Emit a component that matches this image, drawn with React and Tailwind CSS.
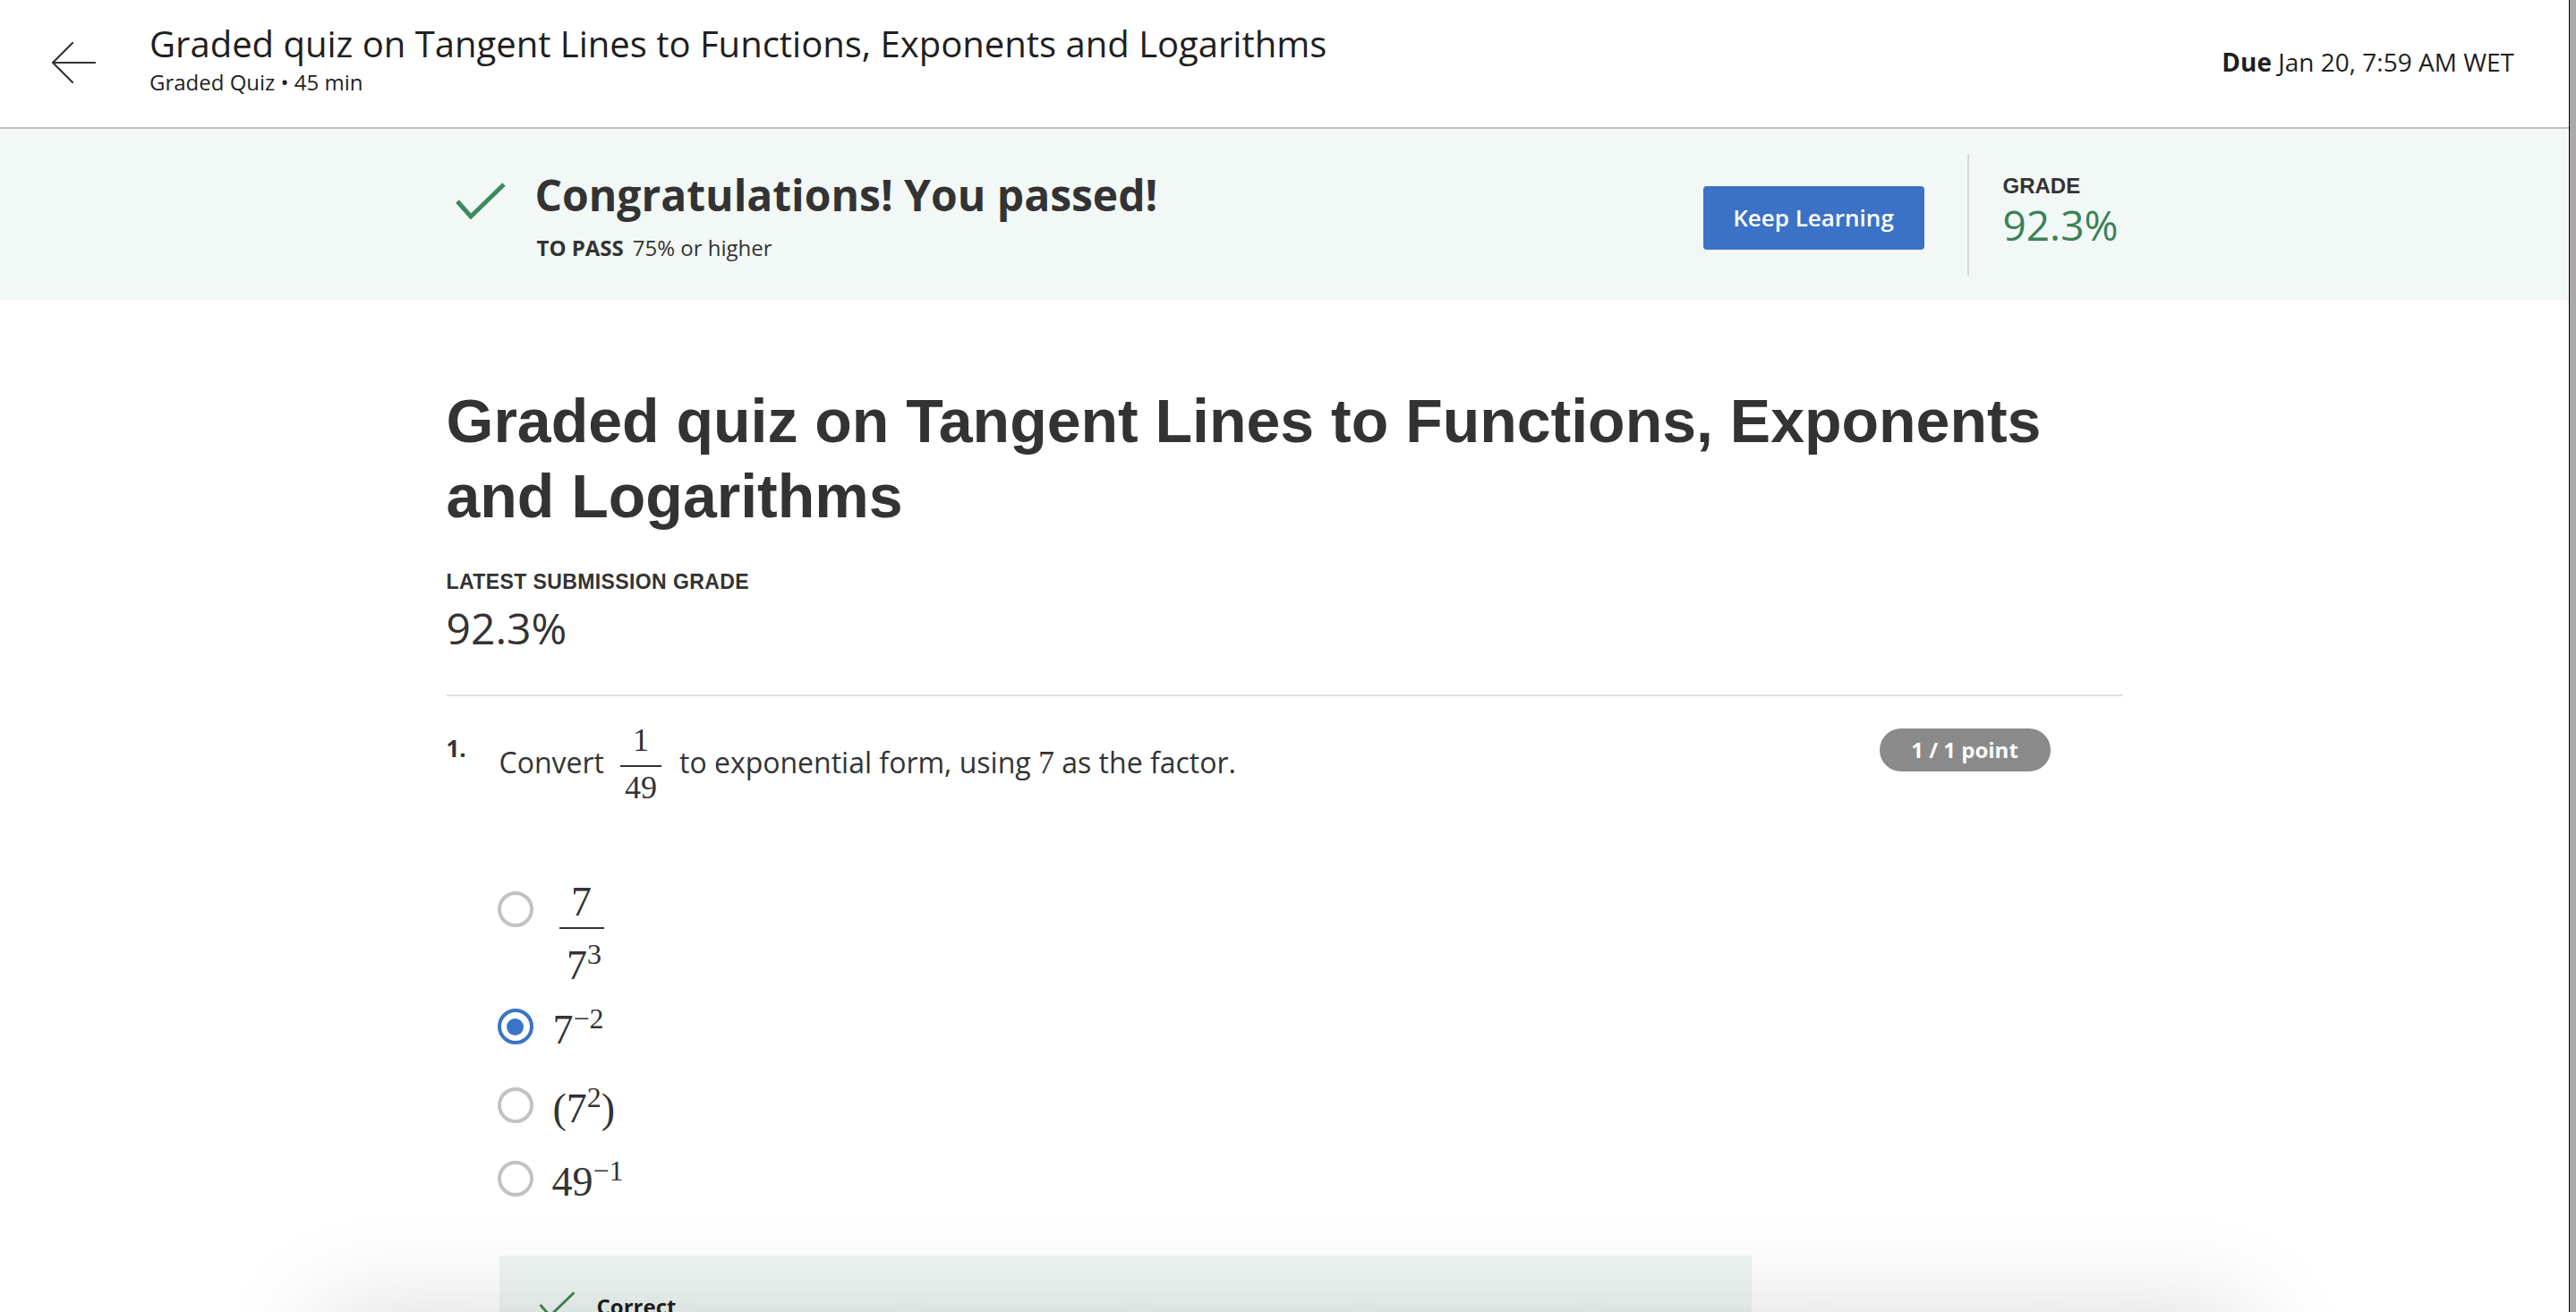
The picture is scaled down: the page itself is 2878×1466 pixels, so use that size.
import React from 'react'

const sans = { fontFamily: '"Open Sans", "Liberation Sans", sans-serif' }
const arial = { fontFamily: '"Liberation Sans", Arial, sans-serif' }
const serif = { fontFamily: '"Liberation Serif", serif' }

const BackArrow = () => (
  <svg width="50" height="46" viewBox="0 0 50 46" fill="none" stroke="#333" strokeWidth="2.2" strokeLinecap="round" strokeLinejoin="round">
    <path d="M49 23 H2" />
    <path d="M24 1 L2 23 L24 45" />
  </svg>
)

const Check = ({ w = 56, h = 44, stroke = 5 }) => (
  <svg width={w} height={h} viewBox="0 0 56 44" fill="none" stroke="#3d8a5c" strokeWidth={stroke} strokeLinecap="butt" strokeLinejoin="miter">
    <path d="M2 22 L17 39 L54 3" />
  </svg>
)

const Radio = ({ checked }) =>
  checked ? (
    <span className="w-[40px] h-[40px] rounded-full border-[4px] border-[#3b73c8] flex items-center justify-center shrink-0">
      <span className="w-[19px] h-[19px] rounded-full bg-[#3b73c8]" />
    </span>
  ) : (
    <span className="block w-[40px] h-[40px] rounded-full border-[4px] border-[#c2c2c2] shrink-0" />
  )

const Sup = ({ children }) => (
  <span className="text-[32px] leading-none align-[17px]">{children}</span>
)

export default function App() {
  return (
    <div className="w-full h-[1466px] overflow-hidden flex bg-white text-[#333]" style={sans}>
      <div className="flex-1 relative overflow-hidden">
        {/* Top header */}
        <header className="h-[144px] border-b-2 border-[#c2c2c2] flex items-start">
          <div className="ml-[57px] mt-[47px]">
            <BackArrow />
          </div>
          <div className="ml-[60px] pt-[26px] text-[#1f1f1f]">
            <div className="text-[40px] leading-[46px]">Graded quiz on Tangent Lines to Functions, Exponents and Logarithms</div>
            <div className="mt-[6px] text-[24px] leading-[28px]">Graded Quiz • 45 min</div>
          </div>
          <div className="ml-auto mr-[61px] pt-[51px] text-[28px] leading-[36px] text-[#1f1f1f]">
            <span className="font-bold">Due</span> Jan 20, 7:59 AM WET
          </div>
        </header>

        {/* Passed banner */}
        <section className="h-[191px] bg-[#f2f8f5]">
          <div className="w-[1873px] mx-auto h-full flex items-start">
            <div className="ml-[10px] mt-[59px]">
              <Check />
            </div>
            <div className="ml-[33px] mt-[46px]">
              <div className="text-[48px] leading-[56px] font-bold text-[#333]">Congratulations! You passed!</div>
              <div className="mt-[16px] text-[24px] leading-[30px] ml-[2px]">
                <span className="font-bold">TO PASS</span>
                <span className="ml-[10px]">75% or higher</span>
              </div>
            </div>
            <div className="ml-auto flex items-start">
              <button className="mt-[64px] w-[247px] h-[71px] rounded-[4px] bg-[#3c72c6] text-white text-[26px] font-semibold">
                Keep Learning
              </button>
              <div className="mt-[28px] ml-[48px] mr-[38px] w-[2px] h-[136px] bg-[#dadada]" />
              <div className="mt-[50px] w-[134px]">
                <div className="text-[24px] leading-[28px] font-bold" style={arial}>GRADE</div>
                <div className="mt-[3px] text-[46px] leading-[52px] text-[#3b8157]">92.3%</div>
              </div>
            </div>
          </div>
        </section>

        {/* Main content */}
        <main className="w-[1873px] mx-auto pt-[93px]">
          <h1 className="text-[68px] leading-[84px] font-bold text-[#333]" style={arial}>
            Graded quiz on Tangent Lines to Functions, Exponents and Logarithms
          </h1>
          <div className="mt-[40px] text-[23px] leading-[28px] font-bold tracking-[0.4px]" style={arial}>
            LATEST SUBMISSION GRADE
          </div>
          <div className="mt-[10px] text-[48px] leading-[56px]">92.3%</div>
          <div className="mt-[46px] h-[2px] bg-[#e1e1e1]" />

          {/* Question 1 */}
          <div className="mt-[33px] flex items-start">
            <div className="w-[59px] pt-[10px] text-[26px] leading-[30px] font-bold">1.</div>
            <div className="flex-1 flex items-center text-[32px] leading-[44px]">
              <span className="pb-[4px]">Convert</span>
              <span className="ml-[18px] mr-[20px] flex flex-col items-center w-[46px] text-[36px]" style={serif}>
                <span className="leading-[32px]">1</span>
                <span className="mt-[12px] w-full h-[2px] bg-[#333]" />
                <span className="mt-[7px] leading-[32px]">49</span>
              </span>
              <span className="pb-[4px]">
                to exponential form, using{' '}
                <span className="text-[36px]" style={serif}>7</span> as the factor.
              </span>
            </div>
            <div className="mt-[3px] mr-[81px] w-[191px] h-[48px] rounded-full bg-[#8a8a8a] text-white text-[24px] font-bold flex items-center justify-center">
              1 / 1 point
            </div>
          </div>

          {/* Options */}
          <div className="ml-[57px] text-[46px]" style={serif}>
            <div className="mt-[90px] flex items-start">
              <div className="mt-[10px]">
                <Radio />
              </div>
              <span className="ml-[29px] flex flex-col items-center w-[50px]">
                <span className="leading-[44px]">7</span>
                <span className="mt-[6px] w-full h-[2px] bg-[#333]" />
                <span className="mt-[12px] leading-[44px] pl-[6px]">
                  7<Sup>3</Sup>
                </span>
              </span>
            </div>
            <div className="mt-[24px] h-[44px] flex items-center">
              <Radio checked />
              <span className="ml-[22px] leading-[44px]">
                7<Sup>−2</Sup>
              </span>
            </div>
            <div className="mt-[44px] h-[44px] flex items-center">
              <Radio />
              <span className="ml-[22px] leading-[44px]">
                (7<Sup>2</Sup>)
              </span>
            </div>
            <div className="mt-[38px] h-[44px] flex items-center">
              <Radio />
              <span className="ml-[21px] leading-[44px]">
                49<Sup>−1</Sup>
              </span>
            </div>
          </div>

          {/* Feedback */}
          <div className="mt-[64px] ml-[59px] w-[1399px] h-[200px] bg-[#eff6f3] pt-[39px] pl-[44px] flex items-start">
            <Check w={41} h={32} stroke={4} />
            <span className="ml-[24px] mt-[3px] text-[24px] leading-[30px] font-bold text-[#1f1f1f]">Correct</span>
          </div>
        </main>

        {/* bottom sticky bar shadow */}
        <div className="absolute left-[400px] w-[2070px] top-[1510px] h-[200px] bg-white shadow-[0_0_120px_40px_rgba(0,0,0,0.16)]" />
      </div>
      <div className="w-[8px] border-l border-black bg-[#a9a9a9]" />
    </div>
  )
}
